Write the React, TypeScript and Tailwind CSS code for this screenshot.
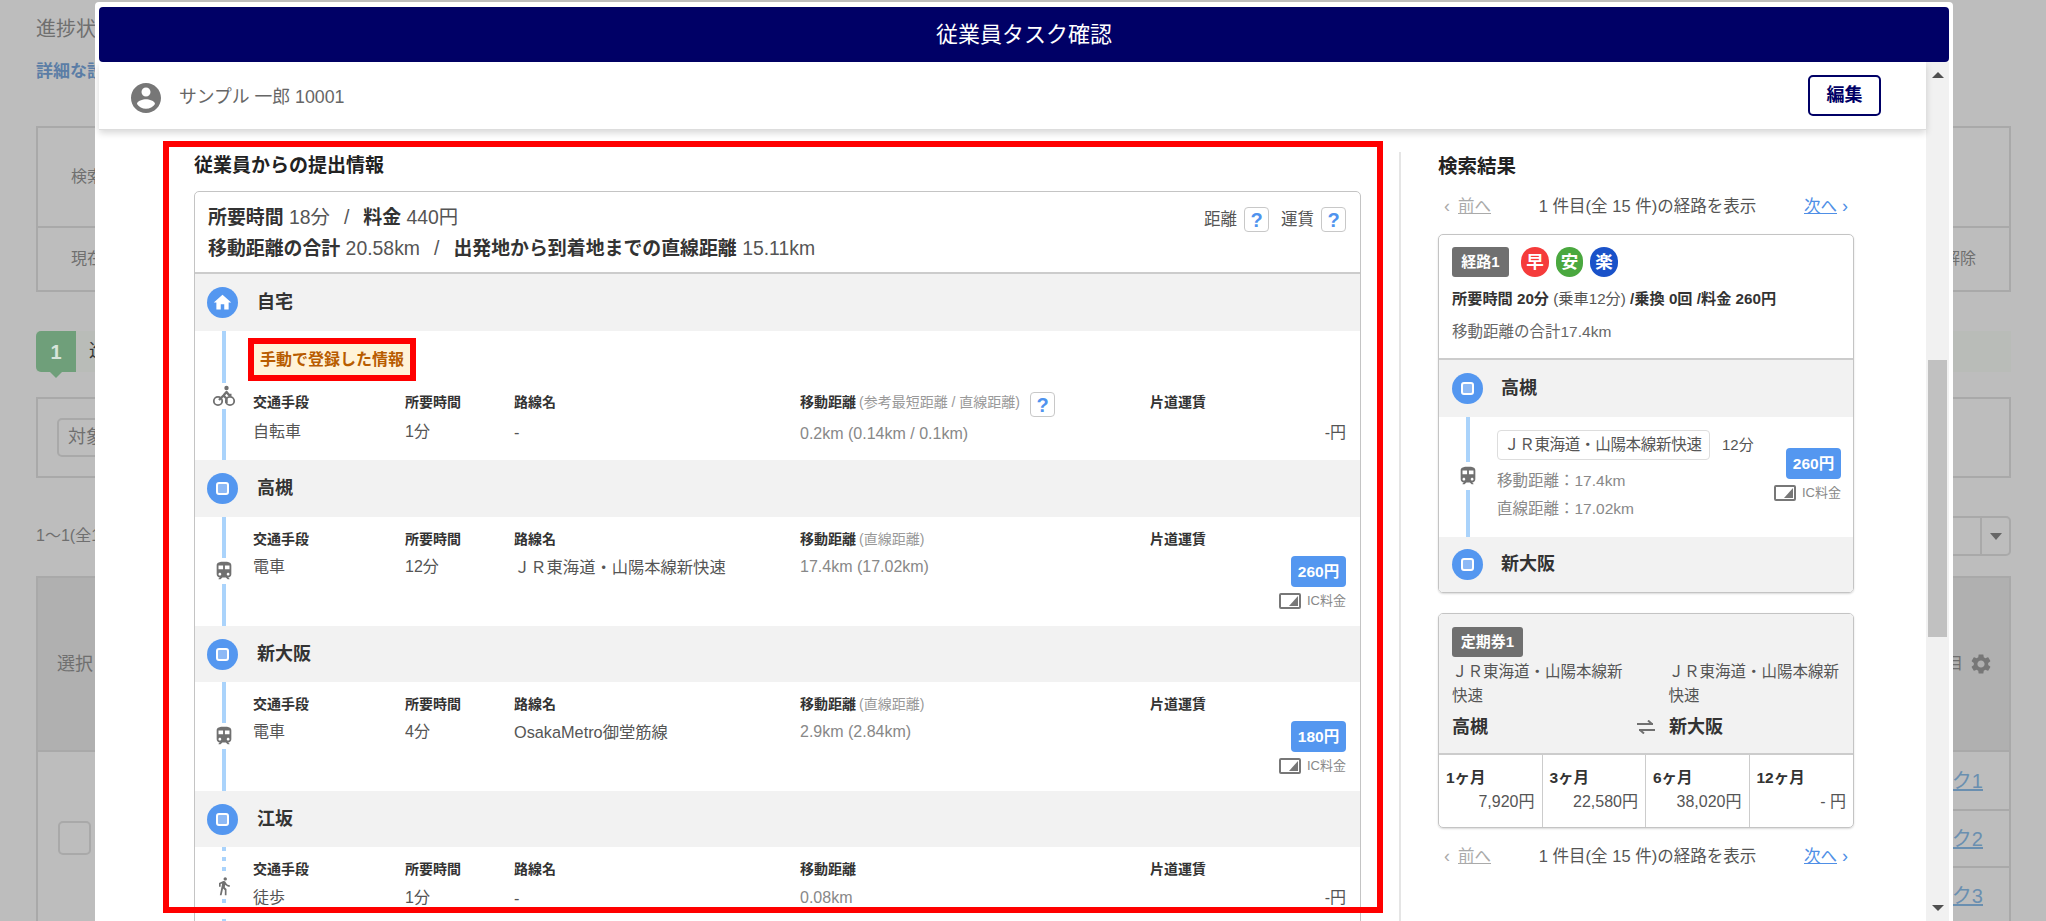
import React from "react";

const LINE = "bg-[#aad3fb]";

function Path({ d, cls }: { d: string; cls: string }) {
  return (
    <svg viewBox="0 0 24 24" className={cls} fill="currentColor">
      <path d={d} />
    </svg>
  );
}
const HOME = "M10 20v-6h4v6h5v-8h3L12 3 2 12h3v8z";
const USER =
  "M12 2C6.48 2 2 6.48 2 12s4.48 10 10 10 10-4.48 10-10S17.52 2 12 2zm0 3c1.66 0 3 1.34 3 3s-1.34 3-3 3-3-1.34-3-3 1.34-3 3-3zm0 14.2c-2.5 0-4.71-1.28-6-3.22.03-1.99 4-3.08 6-3.08 1.99 0 5.97 1.09 6 3.08-1.29 1.94-3.5 3.22-6 3.22z";
const TRAIN =
  "M12 2c-4 0-8 .5-8 4v9.5C4 17.43 5.57 19 7.5 19L6 20.5v.5h2.23l2-2H14l2 2h2v-.5L16.5 19c1.93 0 3.5-1.57 3.5-3.5V6c0-3.5-3.58-4-8-4zM7.5 17c-.83 0-1.5-.67-1.5-1.5S6.67 14 7.5 14s1.5.67 1.5 1.5S8.33 17 7.5 17zm3.5-7H6V6h5v4zm2 0V6h5v4h-5zm3.5 7c-.83 0-1.5-.67-1.5-1.5s.67-1.5 1.5-1.5 1.5.67 1.5 1.5-.67 1.5-1.5 1.5z";
const WALK =
  "M13.5 5.5c1.1 0 2-.9 2-2s-.9-2-2-2-2 .9-2 2 .9 2 2 2zM9.8 8.9L7 23h2.1l1.8-8 2.1 2v6h2v-7.5l-2.1-2 .6-3C14.8 12 16.8 13 19 13v-2c-1.9 0-3.5-1-4.3-2.4l-1-1.6c-.4-.6-1-1-1.7-1-.3 0-.5.1-.8.1L6 8.3V13h2V9.6l1.8-.7";
const GEAR =
  "M19.14 12.94c.04-.3.06-.61.06-.94s-.02-.64-.07-.94l2.03-1.58c.18-.14.23-.41.12-.61l-1.92-3.32c-.12-.22-.37-.29-.59-.22l-2.39.96c-.5-.38-1.03-.7-1.62-.94l-.36-2.54c-.04-.24-.24-.41-.48-.41h-3.84c-.24 0-.43.17-.47.41l-.36 2.54c-.59.24-1.13.57-1.62.94l-2.39-.96c-.22-.08-.47 0-.59.22L2.74 8.87c-.12.21-.08.47.12.61l2.03 1.58c-.05.3-.09.63-.09.94s.02.64.07.94l-2.03 1.58c-.18.14-.23.41-.12.61l1.92 3.32c.12.22.37.29.59.22l2.39-.96c.5.38 1.03.7 1.62.94l.36 2.54c.05.24.24.41.48.41h3.84c.24 0 .44-.17.47-.41l.36-2.54c.59-.24 1.13-.56 1.62-.94l2.39.96c.22.08.47 0 .59-.22l1.92-3.32c.12-.22.07-.47-.12-.61l-2.01-1.58zM12 15.6c-1.98 0-3.6-1.62-3.6-3.6s1.62-3.6 3.6-3.6 3.6 1.62 3.6 3.6-1.62 3.6-3.6 3.6z";

function Bike() {
  return (
    <svg viewBox="0 0 24 24" className="w-[24px] h-[24px] text-[#707070]" fill="none" stroke="currentColor">
      <circle cx="6" cy="17" r="4.2" strokeWidth="1.8" />
      <circle cx="18" cy="17" r="4.2" strokeWidth="1.8" />
      <circle cx="14.5" cy="4" r="2.2" fill="currentColor" stroke="none" />
      <path d="M7 16l4.5-4.5 3 3V19M11.5 11.5L14.5 8l2.5 3h2.5" strokeWidth="2.4" strokeLinejoin="round" />
    </svg>
  );
}

function Circle({ home }: { home?: boolean }) {
  return (
    <span className="w-[31px] h-[31px] rounded-full bg-[#5497f0] flex items-center justify-center shrink-0">
      {home ? (
        <Path d={HOME} cls="w-[21px] h-[21px] text-white" />
      ) : (
        <span className="w-[13px] h-[13px] rounded-[3px] border-2 border-white bg-[#8db9f5]" />
      )}
    </span>
  );
}

function Station({ name, home, right, h = "h-[57px]" }: { name: string; home?: boolean; right?: boolean; h?: string }) {
  return (
    <div className={`flex items-center bg-[#f2f2f2] ${h} ${right ? "pl-[13px]" : "pl-[12px]"}`}>
      <Circle home={home} />
      <span className={`font-bold text-[#333] text-[18px] ${right ? "ml-[18px]" : "ml-[19px]"}`}>{name}</span>
    </div>
  );
}

function Rail({ top, mode, dotted }: { top: number; mode: "bike" | "train" | "walk"; dotted?: boolean }) {
  const line = dotted
    ? "bg-[repeating-linear-gradient(to_bottom,#aad3fb_0,#aad3fb_4px,transparent_4px,transparent_10px)]"
    : LINE;
  return (
    <div className="w-[58px] shrink-0 flex flex-col items-center self-stretch">
      <div className={`w-[4px] ${line}`} style={{ height: top }} />
      <div className="h-[26px] flex items-center justify-center">
        {mode === "bike" && <Bike />}
        {mode === "train" && <Path d={TRAIN} cls="w-[22px] h-[22px] text-[#707070]" />}
        {mode === "walk" && <Path d={WALK} cls="w-[20px] h-[20px] text-[#707070]" />}
      </div>
      <div className={`w-[4px] flex-1 ${line}`} />
    </div>
  );
}

function Help() {
  return (
    <span className="w-[25px] h-[25px] border border-[#c8c8c8] rounded-[4px] flex items-center justify-center text-[#4f93ee] font-bold text-[20px] leading-none bg-white shrink-0">
      ?
    </span>
  );
}

function Ic() {
  return (
    <div className="flex items-center justify-end gap-[6px]">
      <span className="w-[22px] h-[16px] border-2 border-[#777] rounded-[2px] flex items-end justify-end p-px">
        <svg viewBox="0 0 10 10" className="w-[10px] h-[10px] text-[#777]" fill="currentColor">
          <path d="M1 10L10 0v10z" />
        </svg>
      </span>
      <span className="text-[13px] text-[#888] leading-[16px]">IC料金</span>
    </div>
  );
}

function Fare({ v }: { v: string }) {
  return (
    <span className="w-[55px] h-[31px] bg-[#5497f0] rounded-[4px] text-white font-bold text-[15.5px] flex items-center justify-center">
      {v}
    </span>
  );
}

type Seg = {
  mode: "bike" | "train" | "walk";
  top: number;
  method: string;
  time: string;
  route: string;
  distLabel?: string;
  dist: string;
  fare?: string;
  help?: boolean;
  manual?: boolean;
  dotted?: boolean;
};

function Segment({ s }: { s: Seg }) {
  const vm = s.manual ? "mt-[8px]" : s.dotted ? "mt-[7px]" : "mt-[6px]";
  const dm = s.manual ? "mt-[10px]" : s.dotted ? "mt-[7px]" : "mt-[6px]";
  const pm = s.manual ? "mt-[9px]" : "mt-[7px]";
  return (
    <div className="flex">
      <Rail top={s.top} mode={s.mode} dotted={s.dotted} />
      <div className="flex-1 pr-[14px]">
        {s.manual && (
          <div className="pt-[7px] pb-[11px] -ml-[5px]">
            <span className="inline-flex items-center h-[43px] px-[6px] box-border border-[6px] border-[#ff0000] bg-[#fff3d9] text-[#b85c00] font-bold text-[16px]">
              手動で登録した情報
            </span>
          </div>
        )}
        <div className={`grid grid-cols-[152px_109px_286px_350px_1fr] grid-rows-[20px_auto] content-start ${s.manual ? "h-[68px]" : "h-[109px] pt-[12px]"}`}>
          {(["交通手段", "所要時間", "路線名"] as const).map((h) => (
            <div key={h} className="text-[14px] leading-[20px] font-bold text-[#333]">
              {h}
            </div>
          ))}
          <div className="text-[14px] leading-[20px] font-bold text-[#333] flex items-start whitespace-nowrap">
            移動距離
            {s.distLabel && <span className="font-normal text-[#999] ml-[3px]">{s.distLabel}</span>}
            {s.help && (
              <span className="ml-[10px]">
                <Help />
              </span>
            )}
          </div>
          <div className="text-[14px] leading-[20px] font-bold text-[#333]">片道運賃</div>
          <div className={`text-[16px] leading-[24px] text-[#555] ${vm}`}>{s.method}</div>
          <div className={`text-[16px] leading-[24px] text-[#555] ${vm}`}>{s.time}</div>
          <div className={`text-[16.3px] leading-[24px] text-[#555] whitespace-nowrap ${vm}`}>{s.route}</div>
          <div className={`text-[16px] leading-[24px] text-[#888] ${dm}`}>{s.dist}</div>
          {s.fare ? (
            <div className="flex flex-col items-end mt-[7px]">
              <Fare v={s.fare} />
              <div className="mt-[6px]">
                <Ic />
              </div>
            </div>
          ) : (
            <div className={`text-[16px] leading-[24px] text-[#555] text-right ${pm}`}>-円</div>
          )}
        </div>
      </div>
    </div>
  );
}

const SEGS: Seg[] = [
  { mode: "bike", top: 52, method: "自転車", time: "1分", route: "-", distLabel: "(参考最短距離 / 直線距離)", dist: "0.2km (0.14km / 0.1km)", help: true, manual: true },
  { mode: "train", top: 41, method: "電車", time: "12分", route: "ＪＲ東海道・山陽本線新快速", distLabel: "(直線距離)", dist: "17.4km (17.02km)", fare: "260円" },
  { mode: "train", top: 41, method: "電車", time: "4分", route: "OsakaMetro御堂筋線", distLabel: "(直線距離)", dist: "2.9km (2.84km)", fare: "180円" },
  { mode: "walk", top: 26, method: "徒歩", time: "1分", route: "-", dist: "0.08km", dotted: true },
];

function Pager() {
  return (
    <div className="flex justify-between items-center px-[6px] h-[24px] text-[16.5px] whitespace-nowrap">
      <span className="text-[#aaa] flex items-center gap-[8px]">
        <span className="text-[18px] leading-none">‹</span>
        <span className="underline">前へ</span>
      </span>
      <span className="text-[#555]">1 件目(全 15 件)の経路を表示</span>
      <span className="text-[#4f8fe6] flex items-center gap-[5px]">
        <span className="underline">次へ</span>
        <span className="text-[18px] leading-none">›</span>
      </span>
    </div>
  );
}

function Month({ label, value, last }: { label: string; value: string; last?: boolean }) {
  return (
    <div className={`px-[7px] pt-[11px] ${last ? "" : "border-r border-[#ccc]"}`}>
      <div className="text-[15.5px] leading-[24px] font-bold text-[#333]">{label}</div>
      <div className="text-[16px] leading-[24px] text-[#555] text-right">{value}</div>
    </div>
  );
}

function Background() {
  const border = "border-2 border-[#a9a9a9]";
  return (
    <div className="pl-[36px] pr-[35px] text-[#6f6f6f] text-[16px]">
      <div className="pt-[15px] text-[20px] leading-[28px]">進捗状況</div>
      <div className="mt-[17px] leading-[24px] font-bold text-[#5b7da6] text-[17px]">詳細な設定</div>
      <div className={`mt-[42px] h-[166px] ${border}`}>
        <div className="h-[100px] flex items-center pl-[33px] border-b-2 border-[#a9a9a9]">検索</div>
        <div className="h-[62px] flex items-center justify-between pl-[33px] pr-[33px]">
          <span>現在</span>
          <span>解除</span>
        </div>
      </div>
      <div className="mt-[39px] h-[41px] flex bg-[#b9bcb8]">
        <div className="relative w-[40px] bg-[#6f9f7a] rounded-l-[5px] flex items-center justify-center text-[#d7e4da] font-bold text-[20px]">
          1
          <span className="absolute left-[14px] -bottom-[6px] w-0 h-0 border-x-[6px] border-x-transparent border-t-[6px] border-t-[#6f9f7a]" />
        </div>
        <span className="ml-[13px] leading-[41px] text-[#333] text-[18px]">進捗</span>
      </div>
      <div className={`mt-[25px] h-[81px] ${border} pl-[19px] pt-[19px]`}>
        <div className="w-[140px] h-[39px] border-2 border-[#a9a9a9] rounded-[5px] pl-[9px] leading-[35px] text-[18px]">対象</div>
      </div>
      <div className="mt-[38px] h-[40px] flex items-center justify-between">
        <span className="text-[16px]">1～1(全1件)</span>
        <div className="w-[160px] h-[40px] border-2 border-[#a9a9a9] rounded-[5px] flex justify-end">
          <div className="w-[29px] border-l-2 border-[#a9a9a9] flex items-center justify-center">
            <span className="w-0 h-0 border-x-[6px] border-x-transparent border-t-[7px] border-t-[#666]" />
          </div>
        </div>
      </div>
      <div className="mt-[20px] border-x-2 border-t-2 border-[#a9a9a9]">
        <div className="h-[172px] bg-[#b0b0b0] flex items-center justify-between pl-[19px] pr-[16px]">
          <span className="text-[18px]">選択</span>
          <span className="flex items-center gap-[6px] text-[16px]">
            項目
            <Path d={GEAR} cls="w-[24px] h-[24px] text-[#777]" />
          </span>
        </div>
        <div className="flex border-t-2 border-[#a9a9a9] justify-between">
          <div className="h-[171px] flex items-center pl-[20px]">
            <span className="w-[33px] h-[34px] border-2 border-[#a9a9a9] rounded-[5px]" />
          </div>
          <div className="w-[200px] text-[#6a8fb0] text-[20px]">
            {["リンク1", "リンク2", "リンク3"].map((t, i) => (
              <div key={t} className={`h-[57px] flex items-center justify-end pr-[26px] ${i ? "border-t-2 border-[#a9a9a9]" : ""}`}>
                <span className="underline">{t}</span>
              </div>
            ))}
          </div>
        </div>
      </div>
    </div>
  );
}

export default function App() {
  const lb = "text-[#333] text-[18.9px]";
  const badge = "text-white font-bold text-[17.5px] flex items-center justify-center h-[30px] rounded-full";
  return (
    <div className="relative w-[2046px] h-[921px] overflow-hidden bg-[#bdbdbd] font-['Liberation_Sans','Noto_Sans_CJK_JP',sans-serif]">
      <Background />

      <div className="absolute left-[95px] top-[2px] w-[1858px] h-[919px] bg-white px-[4px] pt-[5px] flex flex-col overflow-hidden rounded-t-[4px]">
        <div className="h-[55px] shrink-0 bg-[#000066] rounded-[4px] flex items-center justify-center text-white text-[22px]">
          従業員タスク確認
        </div>
        <div className="flex flex-1 min-h-0">
          <div className="flex-1 min-w-0 flex flex-col">
            <div className="relative z-10 h-[68px] shrink-0 bg-white border-b border-[#ddd] shadow-[0_3px_7px_rgba(0,0,0,0.16)] flex items-center justify-between pl-[29px] pr-[45px]">
              <div className="flex items-center gap-[15px] mt-[4px]">
                <Path d={USER} cls="w-[36px] h-[36px] text-[#777]" />
                <span className="text-[17.8px] text-[#666]">サンプル 一郎 10001</span>
              </div>
              <button className="w-[73px] h-[41px] border-2 border-[#000066] rounded-[5px] text-[#000066] font-bold text-[18px]">
                編集
              </button>
            </div>
            <div className="flex flex-1 min-h-0 overflow-hidden pl-[95px]">
              <div className="w-[1167px] shrink-0">
                <div className="pt-[22px] h-[49px] text-[19px] leading-[28px] font-bold text-[#222]">従業員からの提出情報</div>
                <div className="mt-[12px] border border-[#c4c4c4] rounded-t-[5px]">
                  <div className="h-[82px] border-b-2 border-[#ccc] flex justify-between pl-[13px] pr-[14px]">
                    <div className="pt-[10px] text-[19.4px] leading-[30px] text-[#555] whitespace-nowrap">
                      <div>
                        <b className={lb}>所要時間</b> 18分
                        <span className="mx-[14px]">/</span>
                        <b className={lb}>料金</b> 440円
                      </div>
                      <div>
                        <b className={lb}>移動距離の合計</b> 20.58km
                        <span className="mx-[14px]">/</span>
                        <b className={lb}>出発地から到着地までの直線距離</b> 15.11km
                      </div>
                    </div>
                    <div className="pt-[15px] flex items-start text-[16.5px] text-[#555]">
                      <span className="mr-[7px]">距離</span>
                      <Help />
                      <span className="ml-[12px] mr-[7px]">運賃</span>
                      <Help />
                    </div>
                  </div>
                  <Station name="自宅" home />
                  <Segment s={SEGS[0]} />
                  <Station name="高槻" />
                  <Segment s={SEGS[1]} />
                  <Station name="新大阪" h="h-[56px]" />
                  <Segment s={SEGS[2]} />
                  <Station name="江坂" h="h-[56px]" />
                  <Segment s={SEGS[3]} />
                </div>
              </div>

              <div className="ml-[38px] mt-[22px] border-l-2 border-[#e5e5e5] pl-[37px] w-[455px] shrink-0">
                <div className="text-[19.5px] h-[26px] leading-[28px] font-bold text-[#222]">検索結果</div>
                <div className="mt-[16px]">
                  <Pager />
                </div>
                <div className="mt-[16px] border border-[#c4c4c4] rounded-[5px] overflow-hidden shadow-[0_1px_2px_rgba(0,0,0,0.15)]">
                  <div className="px-[13px] pt-[12px] h-[125px] border-b-2 border-[#ccc]">
                    <div className="flex items-center">
                      <span className="w-[57px] h-[30px] rounded-[3px] bg-[#707070] text-white font-bold text-[15px] flex items-center justify-center">経路1</span>
                      <span className={`ml-[12px] w-[28px] bg-[#f53b3b] ${badge}`}>早</span>
                      <span className={`ml-[7px] w-[27px] bg-[#4aa83f] ${badge}`}>安</span>
                      <span className={`ml-[7px] w-[28px] bg-[#1a52c9] ${badge}`}>楽</span>
                    </div>
                    <div className="mt-[11px] text-[15.2px] leading-[22px] font-bold text-[#333] whitespace-nowrap">
                      所要時間 20分 <span className="font-normal text-[#555]">(乗車12分)</span> /乗換 0回 /料金 260円
                    </div>
                    <div className="mt-[11px] text-[15.5px] leading-[22px] text-[#666]">移動距離の合計17.4km</div>
                  </div>
                  <Station name="高槻" right />
                  <div className="flex h-[120px]">
                    <div className="w-[58px] shrink-0 flex flex-col items-center">
                      <div className={`w-[4px] h-[45px] ${LINE}`} />
                      <div className="h-[28px] flex items-center justify-center">
                        <Path d={TRAIN} cls="w-[22px] h-[22px] text-[#707070]" />
                      </div>
                      <div className={`w-[4px] flex-1 ${LINE}`} />
                    </div>
                    <div className="flex-1 flex justify-between pr-[12px]">
                      <div className="pt-[13px]">
                        <div className="flex items-center whitespace-nowrap text-[15px] text-[#555]">
                          <span className="h-[30px] w-[213px] border border-[#ddd] rounded-[4px] flex items-center pl-[6px] text-[15.5px] tracking-[-0.3px]">ＪＲ東海道・山陽本線新快速</span>
                          <span className="ml-[12px]">12分</span>
                        </div>
                        <div className="mt-[9px] text-[15.5px] leading-[24px] text-[#888]">移動距離：17.4km</div>
                        <div className="mt-[4px] text-[15.5px] leading-[24px] text-[#888]">直線距離：17.02km</div>
                      </div>
                      <div className="pt-[31px] flex flex-col items-end">
                        <Fare v="260円" />
                        <div className="mt-[6px]">
                          <Ic />
                        </div>
                      </div>
                    </div>
                  </div>
                  <Station name="新大阪" right h="h-[55px]" />
                </div>

                <div className="mt-[20px] border border-[#c4c4c4] rounded-[5px] overflow-hidden shadow-[0_1px_2px_rgba(0,0,0,0.15)]">
                  <div className="bg-[#f2f2f2] px-[13px] pt-[13px] pb-[13px] border-b-2 border-[#ccc]">
                    <span className="w-[71px] h-[30px] rounded-[3px] bg-[#707070] text-white font-bold text-[15px] flex items-center justify-center">定期券1</span>
                    <div className="mt-[3px] flex text-[15.5px] leading-[24px] text-[#555]">
                      <div className="w-[217px] pr-[40px]">ＪＲ東海道・山陽本線新快速</div>
                      <div className="w-[172px]">ＪＲ東海道・山陽本線新快速</div>
                    </div>
                    <div className="mt-[6px] flex items-center text-[18px] leading-[26px] font-bold text-[#333]">
                      <span className="w-[176px]">高槻</span>
                      <span className="w-[36px] mr-[5px] flex justify-center">
                        <svg viewBox="0 0 18 14" className="w-[18px] h-[14px] text-[#707070]" fill="none" stroke="currentColor" strokeWidth="2">
                          <path d="M0 4h16M11 0.5l4 3.5M18 10H2M7 13.5L3 10" />
                        </svg>
                      </span>
                      <span>新大阪</span>
                    </div>
                  </div>
                  <div className="grid grid-cols-4 h-[72px]">
                    <Month label="1ヶ月" value="7,920円" />
                    <Month label="3ヶ月" value="22,580円" />
                    <Month label="6ヶ月" value="38,020円" />
                    <Month label="12ヶ月" value="- 円" last />
                  </div>
                </div>
                <div className="mt-[16px]">
                  <Pager />
                </div>
              </div>
            </div>
          </div>

          <div className="w-[23px] shrink-0 bg-[#f1f1f1] flex flex-col items-center">
            <span className="mt-[10px] w-0 h-0 border-x-[6px] border-x-transparent border-b-[6px] border-b-[#505050]" />
            <div className="mt-[282px] w-[19px] h-[277px] bg-[#c1c1c1]" />
            <div className="flex-1" />
            <span className="mb-[10px] w-0 h-0 border-x-[6px] border-x-transparent border-t-[6px] border-t-[#505050]" />
          </div>
        </div>
      </div>

      <div className="absolute left-[163px] top-[141px] w-[1220px] h-[772px] border-[6px] border-[#ff0000] pointer-events-none" />
    </div>
  );
}
